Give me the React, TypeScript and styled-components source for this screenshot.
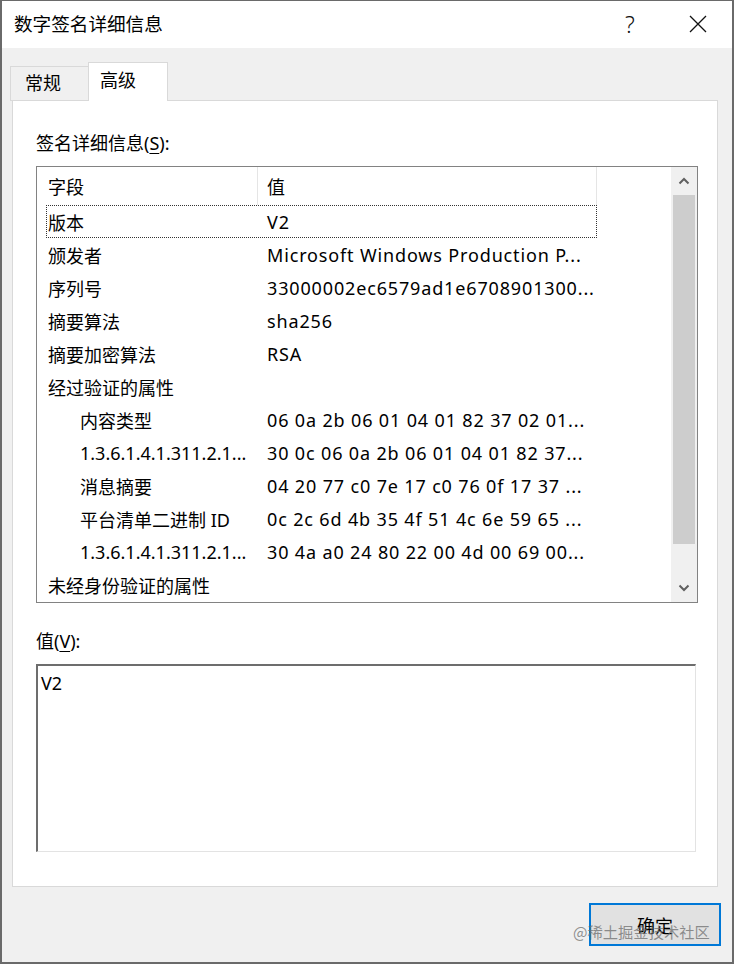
import React from "react";
import styled, { createGlobalStyle } from "styled-components";

const FONT = `"Noto Sans", "Noto Sans CJK SC", sans-serif`;

const Global = createGlobalStyle`
  html, body { margin: 0; padding: 0; background: #ffffff; }
  body { font-family: ${FONT}; color: #000; }
  * { box-sizing: border-box; }
`;

const Window = styled.div`
  position: relative;
  width: 734px;
  height: 964px;
  border: 2px solid #6a6a6a;
  border-top-width: 1px;
  display: flex;
  flex-direction: column;
  background: #f0f0f0;
  font-family: ${FONT};
`;

const TitleBar = styled.div`
  height: 47px;
  flex: none;
  background: #ffffff;
  display: flex;
  align-items: center;
  padding-left: 12px;
`;

const Title = styled.div`
  font-size: 18.6px;
  flex: 1;
  line-height: 24px;
  margin-top: -2px;
`;

const TitleButton = styled.div`
  width: 68px;
  height: 47px;
  display: flex;
  align-items: center;
  justify-content: center;
  font-size: 23px;
  font-family: "Noto Sans", sans-serif;
  font-weight: 300;
  color: #111;
  padding-bottom: 2px;
`;

const Body = styled.div`
  flex: 1;
  display: flex;
  flex-direction: column;
  padding: 14px 14px 0 10px;
`;

const TabStrip = styled.div`
  display: flex;
  align-items: flex-end;
  height: 39px;
  margin-left: -2px;
  position: relative;
  z-index: 1;
  margin-bottom: -1px;
`;

const Tab = styled.div<{ $active?: boolean }>`
  width: ${(p) => (p.$active ? 80 : 78)}px;
  height: ${(p) => (p.$active ? 39 : 35)}px;
  background: ${(p) => (p.$active ? "#ffffff" : "#f0f0f0")};
  border: 1px solid #d9d9d9;
  border-bottom: ${(p) => (p.$active ? "none" : "1px solid #d9d9d9")};
  border-right: ${(p) => (p.$active ? "1px solid #d9d9d9" : "none")};
  font-size: 18px;
  line-height: 24px;
  padding-left: ${(p) => (p.$active ? 11 : 14)}px;
  padding-top: ${(p) => (p.$active ? 5 : 4)}px;
`;

const Panel = styled.div`
  height: 787px;
  background: #ffffff;
  border: 1px solid #d9d9d9;
  padding: 30px 19px 0 23px;
  display: flex;
  flex-direction: column;
`;

const FieldLabel = styled.div<{ $gap: number }>`
  font-size: 18px;
  line-height: 24px;
  margin-top: ${(p) => p.$gap}px;
  margin-bottom: 11px;
  u { text-underline-offset: 3px; }
`;

const ListBox = styled.div`
  height: 437px;
  border: 1px solid #828282;
  display: flex;
  background: #ffffff;
`;

const ListContent = styled.div`
  flex: 1;
  display: flex;
  flex-direction: column;
`;

const HeaderRow = styled.div`
  height: 38px;
  display: grid;
  grid-template-columns: 221px 339px;
  font-size: 18px;
`;

const HeaderCell = styled.div<{ $pad: number }>`
  display: flex;
  align-items: center;
  padding-left: ${(p) => p.$pad}px;
  border-right: 1px solid #e5e5e5;
  height: 38px;
`;

const Row = styled.div<{ $focus?: boolean }>`
  height: 33px;
  margin-left: 9px;
  width: 551px;
  display: grid;
  grid-template-columns: 212px 339px;
  align-items: center;
  font-size: 18px;
  white-space: nowrap;
  outline: ${(p) => (p.$focus ? "1px dotted #333" : "none")};
  outline-offset: -1px;
`;

const Cell = styled.div<{ $indent?: number }>`
  padding-left: ${(p) => p.$indent ?? 2}px;
  overflow: hidden;
`;

const ValueCell = styled.div`
  padding-left: 9px;
  overflow: hidden;
  letter-spacing: 0.85px;
`;

const ScrollBar = styled.div`
  width: 26px;
  background: #f0f0f0;
  display: flex;
  flex-direction: column;
  align-items: center;
`;

const ScrollArrow = styled.div`
  width: 26px;
  height: 28px;
  display: flex;
  align-items: center;
  justify-content: center;
`;

const ScrollThumb = styled.div`
  width: 22px;
  height: 349px;
  background: #cdcdcd;
`;

const ScrollTrack = styled.div`
  flex: 1;
`;

const ValueBox = styled.div`
  height: 188px;
  margin-right: 2px;
  border-top: 2px solid #6d6d6d;
  border-left: 2px solid #6d6d6d;
  border-right: 1px solid #e3e3e3;
  border-bottom: 1px solid #e3e3e3;
  font-size: 18px;
  line-height: 24px;
  padding: 5px 0 0 3px;
`;

const Footer = styled.div`
  display: flex;
  justify-content: flex-end;
  padding-top: 16px;
  margin-right: -3px;
`;

const Button = styled.div`
  width: 132px;
  height: 43px;
  border: 2px solid #0078d7;
  background: #e1e1e1;
  display: flex;
  align-items: center;
  justify-content: center;
  font-size: 18px;
`;

const Watermark = styled.div`
  position: absolute;
  left: 571px;
  top: 919px;
  font-size: 15.3px;
  line-height: 22px;
  color: rgba(110, 110, 110, 0.75);
  font-family: "Noto Sans CJK SC", sans-serif;
  white-space: nowrap;
`;

const Chevron = ({ up }: { up?: boolean }) => (
  <svg width="12" height="8" viewBox="0 0 12 8">
    <path
      d={up ? "M1.5 6.5 L6 2 L10.5 6.5" : "M1.5 1.5 L6 6 L10.5 1.5"}
      fill="none"
      stroke="#606060"
      strokeWidth="2"
    />
  </svg>
);

const CloseIcon = () => (
  <svg width="18" height="18" viewBox="0 0 18 18">
    <path d="M1 1 L17 17 M17 1 L1 17" stroke="#111" strokeWidth="1.3" fill="none" />
  </svg>
);

const rows: { f: string; v: string; indent?: boolean }[] = [
  { f: "版本", v: "V2" },
  { f: "颁发者", v: "Microsoft Windows Production P..." },
  { f: "序列号", v: "33000002ec6579ad1e6708901300..." },
  { f: "摘要算法", v: "sha256" },
  { f: "摘要加密算法", v: "RSA" },
  { f: "经过验证的属性", v: "" },
  { f: "内容类型", v: "06 0a 2b 06 01 04 01 82 37 02 01...", indent: true },
  { f: "1.3.6.1.4.1.311.2.1...", v: "30 0c 06 0a 2b 06 01 04 01 82 37...", indent: true },
  { f: "消息摘要", v: "04 20 77 c0 7e 17 c0 76 0f 17 37 ...", indent: true },
  { f: "平台清单二进制 ID", v: "0c 2c 6d 4b 35 4f 51 4c 6e 59 65 ...", indent: true },
  { f: "1.3.6.1.4.1.311.2.1...", v: "30 4a a0 24 80 22 00 4d 00 69 00...", indent: true },
  { f: "未经身份验证的属性", v: "" },
];

export default function App() {
  return (
    <>
      <Global />
      <Window>
        <TitleBar>
          <Title>数字签名详细信息</Title>
          <TitleButton>?</TitleButton>
          <TitleButton>
            <CloseIcon />
          </TitleButton>
        </TitleBar>
        <Body>
          <TabStrip>
            <Tab>常规</Tab>
            <Tab $active>高级</Tab>
          </TabStrip>
          <Panel>
            <FieldLabel $gap={0}>
              签名详细信息(<u>S</u>):
            </FieldLabel>
            <ListBox>
              <ListContent>
                <HeaderRow>
                  <HeaderCell $pad={11}>字段</HeaderCell>
                  <HeaderCell $pad={9}>值</HeaderCell>
                </HeaderRow>
                {rows.map((r, i) => (
                  <Row key={i} $focus={i === 0}>
                    <Cell $indent={r.indent ? 34 : 2}>{r.f}</Cell>
                    <ValueCell>{r.v}</ValueCell>
                  </Row>
                ))}
              </ListContent>
              <ScrollBar>
                <ScrollArrow>
                  <Chevron up />
                </ScrollArrow>
                <ScrollThumb />
                <ScrollTrack />
                <ScrollArrow>
                  <Chevron />
                </ScrollArrow>
              </ScrollBar>
            </ListBox>
            <FieldLabel $gap={26}>
              值(<u>V</u>):
            </FieldLabel>
            <ValueBox>V2</ValueBox>
          </Panel>
          <Footer>
            <Button>确定</Button>
          </Footer>
        </Body>
        <Watermark>@稀土掘金技术社区</Watermark>
      </Window>
    </>
  );
}
